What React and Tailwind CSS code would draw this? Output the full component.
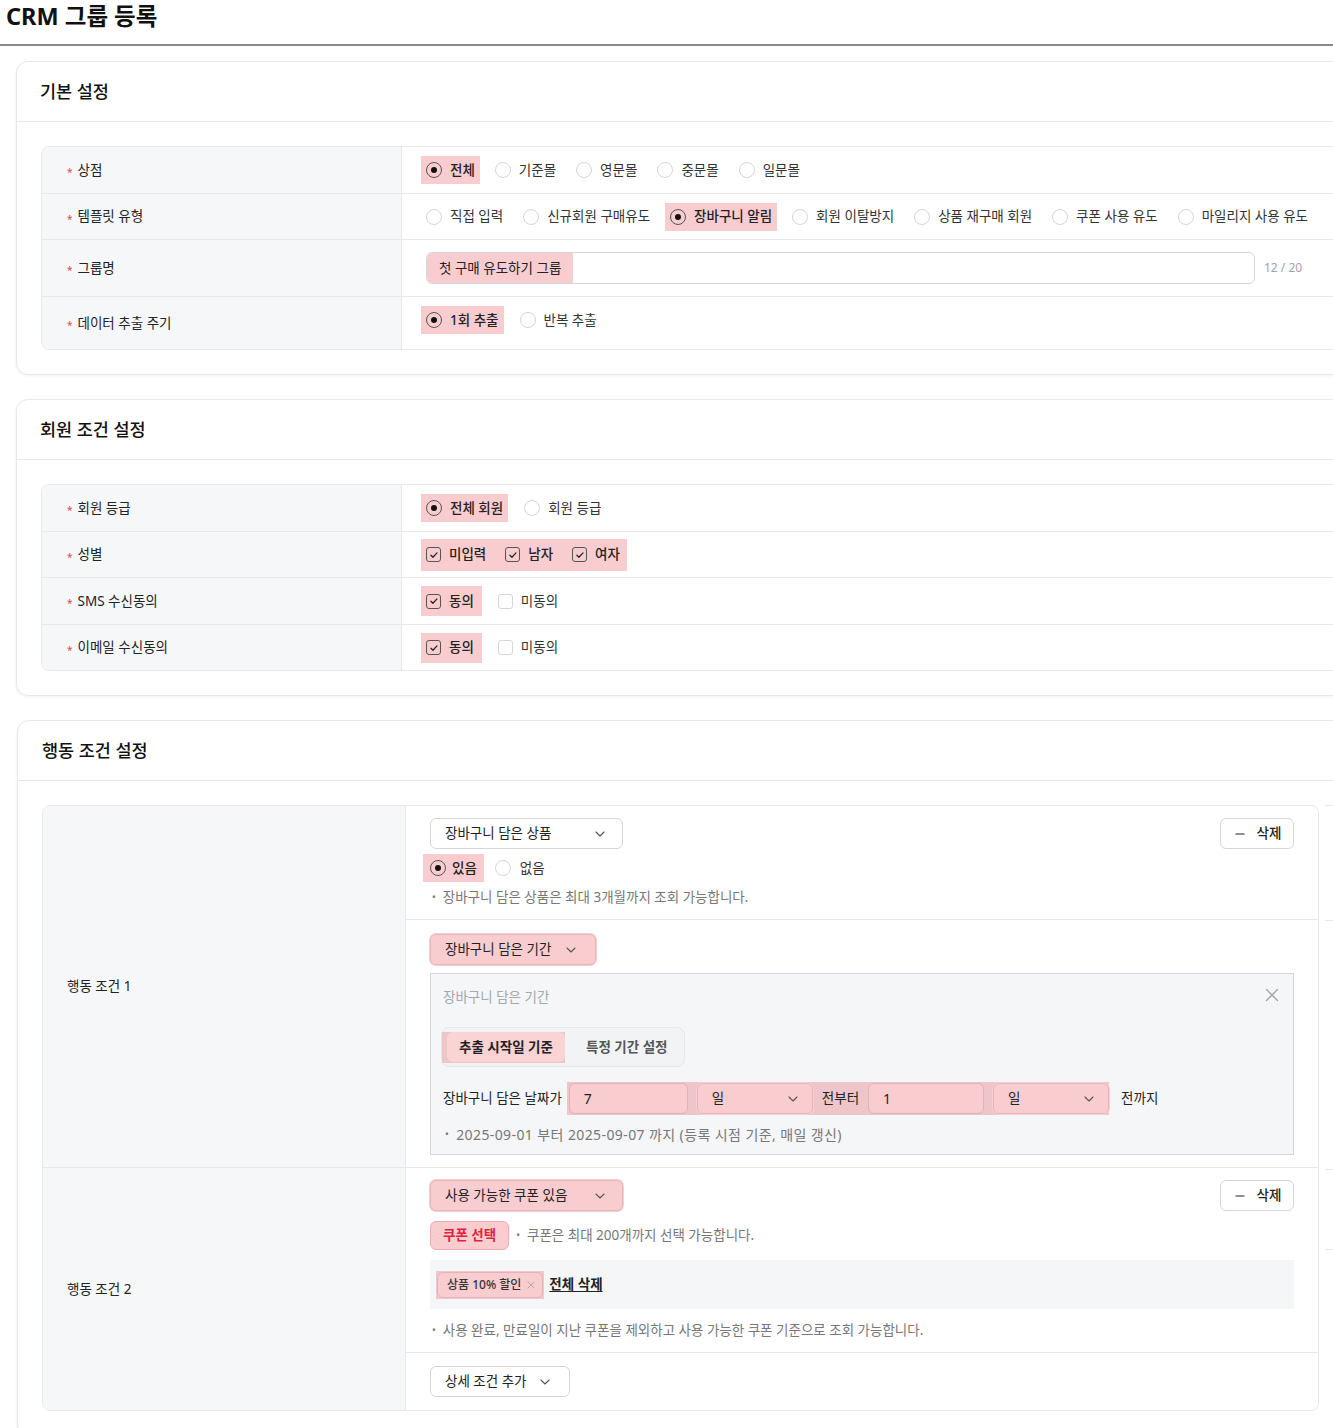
import { ChevronDown, Minus, X } from "lucide-react";

const FONT = "font-['Noto_Sans','Noto_Sans_CJK_KR',sans-serif]";

function Radio({ checked }) {
  if (checked) {
    return (
      <span className="flex h-4 w-4 shrink-0 items-center justify-center rounded-full border border-[#555]">
        <span className="h-[6px] w-[6px] rounded-full bg-[#111]" />
      </span>
    );
  }
  return <span className="h-4 w-4 shrink-0 rounded-full border border-[#d4d6db] bg-white" />;
}

function Check({ checked }) {
  if (checked) {
    return (
      <span className="flex h-[15px] w-[15px] shrink-0 items-center justify-center rounded-[3px] border border-[#555]">
        <svg viewBox="0 0 12 12" className="h-[10px] w-[10px]">
          <path d="M2.3 6.3l2.4 2.4 4.9-5.2" fill="none" stroke="#222" strokeWidth="1.5" strokeLinecap="round" strokeLinejoin="round" />
        </svg>
      </span>
    );
  }
  return <span className="h-[15px] w-[15px] shrink-0 rounded-[3px] border border-[#d4d6db] bg-white" />;
}

function Opt({ type = "radio", checked, label, hl }) {
  return (
    <label className={`flex h-7 items-center gap-2 px-[5px] ${hl ? "bg-[#f9cdd0]" : ""}`}>
      {type === "radio" ? <Radio checked={checked} /> : <Check checked={checked} />}
      <span className={`text-[13.5px] ${checked ? "font-medium text-[#222]" : "text-[#333]"}`}>{label}</span>
    </label>
  );
}

function Row({ label, h, last, cell = "", children }) {
  return (
    <div className={`flex ${h} ${last ? "" : "border-b border-[#e8e9ec]"}`}>
      <div className="flex w-[360px] shrink-0 items-center border-r border-[#e8e9ec] bg-[#f6f7f9] pl-[25px] text-[13.5px] text-[#222]">
        <span className="mr-[5px] mt-[4px] text-[10px] leading-none text-[#ef4444]">*</span>
        {label}
      </div>
      <div className={`flex flex-1 items-center pl-[19px] ${cell}`}>{children}</div>
    </div>
  );
}

function Card({ title, children, className = "", headPad = "px-[23px]" }) {
  return (
    <div className={`w-[1380px] rounded-xl border border-[#e8e9ec] bg-white shadow-[0_1px_3px_rgba(0,0,0,0.06)] ${className}`}>
      <div className={`flex h-[60px] items-center border-b border-[#e8e9ec] ${headPad} text-[17.5px] font-medium text-[#111]`}>
        {title}
      </div>
      {children}
    </div>
  );
}

function Select({ label, w, hl, pr = "pr-[14px]" }) {
  return (
    <div
      className={`flex h-[31px] ${w} shrink-0 items-center justify-between rounded-md border pl-[14px] ${pr} text-[13.5px] text-[#222] ${
        hl ? "border-[#e4b6ba] bg-[#f9cdd0] shadow-[0_0_0_1px_#f9cdd0]" : "border-[#d4d6db] bg-white"
      }`}
    >
      <span>{label}</span>
      <ChevronDown size={16} strokeWidth={1.6} className="text-[#555]" />
    </div>
  );
}

function DeleteBtn() {
  return (
    <div className="flex h-[31px] w-[74px] shrink-0 items-center justify-center gap-[10px] rounded-md border border-[#d4d6db] bg-white text-[13.5px] font-medium text-[#222]">
      <Minus size={14} strokeWidth={1.8} />
      <span>삭제</span>
    </div>
  );
}

function Note({ children, className = "text-[13.5px]" }) {
  return (
    <div className={`flex h-[18px] items-center gap-[7px] text-[#777] ${className}`}>
      <span className="text-[10px]">•</span>
      <span>{children}</span>
    </div>
  );
}

export default function App() {
  return (
    <div className={`h-[1428px] w-[1333px] overflow-hidden bg-white ${FONT}`}>
      <div className="flex h-[46px] items-start border-b-2 border-[#8a8a8a] pl-[6px] pt-[2px]">
        <h1 className="text-[23.5px] font-bold leading-[28px] text-[#111]">CRM 그룹 등록</h1>
      </div>

      <div className="flex flex-col gap-6 pl-4 pt-[15px]">
        {/* 기본 설정 */}
        <Card title="기본 설정">
          <div className="p-6">
            <div className="overflow-hidden rounded-lg border border-[#e8e9ec]">
              <Row label="상점" h="h-[47px]">
                <div className="flex items-center gap-[10px]">
                  <Opt checked hl label="전체" />
                  <Opt label="기준몰" />
                  <Opt label="영문몰" />
                  <Opt label="중문몰" />
                  <Opt label="일문몰" />
                </div>
              </Row>
              <Row label="템플릿 유형" h="h-[46px]">
                <div className="flex items-center gap-[10px]">
                  <Opt label="직접 입력" />
                  <Opt label="신규회원 구매유도" />
                  <Opt checked hl label="장바구니 알림" />
                  <Opt label="회원 이탈방지" />
                  <Opt label="상품 재구매 회원" />
                  <Opt label="쿠폰 사용 유도" />
                  <Opt label="마일리지 사용 유도" />
                </div>
              </Row>
              <Row label="그룹명" h="h-[57px]">
                <div className="ml-[5px] flex items-center">
                  <div className="flex h-[32px] w-[829px] items-center overflow-hidden rounded-md border border-[#d4d6db]">
                    <div className="flex h-full items-center bg-[#f9cdd0] px-[12px] text-[13.5px] text-[#222]">
                      첫 구매 유도하기 그룹
                    </div>
                  </div>
                  <span className="ml-[9px] text-[12px] text-[#9ca3af]">12 / 20</span>
                </div>
              </Row>
              <Row label="데이터 추출 주기" h="h-[52px]" last cell="pb-[6px]">
                <div className="flex items-center gap-[11px]">
                  <Opt checked hl label="1회 추출" />
                  <Opt label="반복 추출" />
                </div>
              </Row>
            </div>
          </div>
        </Card>

        {/* 회원 조건 설정 */}
        <Card title="회원 조건 설정">
          <div className="p-6">
            <div className="overflow-hidden rounded-lg border border-[#e8e9ec]">
              <Row label="회원 등급" h="h-[47px]">
                <div className="flex items-center gap-[11px]">
                  <Opt checked hl label="전체 회원" />
                  <Opt label="회원 등급" />
                </div>
              </Row>
              <Row label="성별" h="h-[46px]">
                <div className="flex h-8 items-center gap-[9px] bg-[#f9cdd0] pr-[2px]">
                  <Opt type="check" checked label="미입력" />
                  <Opt type="check" checked label="남자" />
                  <Opt type="check" checked label="여자" />
                </div>
              </Row>
              <Row label="SMS 수신동의" h="h-[47px]">
                <div className="flex items-center gap-[11px]">
                  <div className="flex h-[30px] items-center bg-[#f9cdd0] pr-[3px]">
                    <Opt type="check" checked label="동의" />
                  </div>
                  <Opt type="check" label="미동의" />
                </div>
              </Row>
              <Row label="이메일 수신동의" h="h-[45px]" last>
                <div className="flex items-center gap-[11px]">
                  <div className="flex h-[30px] items-center bg-[#f9cdd0] pr-[3px]">
                    <Opt type="check" checked label="동의" />
                  </div>
                  <Opt type="check" label="미동의" />
                </div>
              </Row>
            </div>
          </div>
        </Card>

        {/* 행동 조건 설정 */}
        <Card title="행동 조건 설정" className="ml-[1px]" headPad="px-[24px]">
          <div className="flex gap-[6px] p-6">
            <div className="w-[1277px] shrink-0 overflow-hidden rounded-lg border border-[#e8e9ec]">
              {/* 행동 조건 1 */}
              <div className="flex border-b border-[#e8e9ec]">
                <div className="flex w-[363px] shrink-0 items-center border-r border-[#e8e9ec] bg-[#f6f7f9] pl-[24px] text-[13.5px] text-[#222]">
                  행동 조건 1
                </div>
                <div className="flex-1">
                  <div className="border-b border-[#e8e9ec] px-6 pb-[13px] pt-[12px]">
                    <div className="flex items-start justify-between">
                      <Select label="장바구니 담은 상품" w="w-[193px]" />
                      <DeleteBtn />
                    </div>
                    <div className="ml-[-7px] mt-[5px] flex items-center gap-[4px]">
                      <label className="flex h-7 items-center gap-[6px] bg-[#f9cdd0] px-[7px]">
                        <Radio checked />
                        <span className="text-[13.5px] font-medium text-[#222]">있음</span>
                      </label>
                      <label className="flex h-7 items-center gap-[9px] px-[7px]">
                        <Radio />
                        <span className="text-[13.5px] text-[#333]">없음</span>
                      </label>
                    </div>
                    <Note className="mt-[6px] pl-[2px] text-[13.5px]">장바구니 담은 상품은 최대 3개월까지 조회 가능합니다.</Note>
                  </div>

                  <div className="px-6 pb-[12px] pt-[14px]">
                    <Select label="장바구니 담은 기간" w="w-[166px]" hl pr="pr-[16px]" />
                    <div className="mt-[8px] h-[182px] w-[864px] border border-[#d4d6db] bg-[#f5f6f8] px-[12px] pt-[14px]">
                      <div className="flex h-[18px] items-center justify-between">
                        <span className="text-[13.5px] text-[#a3a7ae]">장바구니 담은 기간</span>
                        <X size={22} strokeWidth={1.4} className="mr-[-2px] mt-[-5px] text-[#9ca3af]" />
                      </div>
                      <div className="ml-[-2px] mt-[21px] flex h-[40px] w-[244px] items-center rounded-lg border border-[#e6e7ea] bg-[#f2f3f5]">
                        <div className="flex h-[31px] items-center bg-[#eec6c9] pl-[5px]">
                          <div className="flex h-[30px] items-center rounded-md bg-[#fad3d5] px-[12px] text-[13.5px] font-semibold text-[#222]">
                            추출 시작일 기준
                          </div>
                        </div>
                        <span className="ml-[21px] text-[13.5px] font-semibold text-[#555]">특정 기간 설정</span>
                      </div>
                      <div className="mt-[15px] flex items-center text-[13.5px] text-[#222]">
                        <span>장바구니 담은 날짜가</span>
                        <div className="ml-[5px] flex h-[33px] items-center gap-[9px] bg-[#eec6c9] pl-[2px]">
                          <div className="flex h-[31px] w-[119px] items-center rounded-md border border-[#e0b3b7] bg-[#f9cdd0] pl-[14px] text-[14px]">7</div>
                          <Select label="일" w="w-[116px]" hl pr="pr-[11px]" />
                          <span>전부터</span>
                          <div className="flex h-[31px] w-[116px] items-center rounded-md border border-[#e0b3b7] bg-[#f9cdd0] pl-[14px] text-[14px]">1</div>
                          <Select label="일" w="w-[116px]" hl pr="pr-[11px]" />
                        </div>
                        <span className="ml-[12px]">전까지</span>
                      </div>
                      <Note className="mt-[9px] h-[20px] pl-[2px] text-[14px] tracking-[0.4px]">2025-09-01 부터 2025-09-07 까지 (등록 시점 기준, 매일 갱신)</Note>
                    </div>
                  </div>
                </div>
              </div>

              {/* 행동 조건 2 */}
              <div className="flex">
                <div className="flex w-[363px] shrink-0 items-center border-r border-[#e8e9ec] bg-[#f6f7f9] pl-[24px] text-[13.5px] text-[#222]">
                  행동 조건 2
                </div>
                <div className="flex-1">
                  <div className="border-b border-[#e8e9ec] px-6 pb-[13px] pt-[12px]">
                    <div className="flex items-start justify-between">
                      <Select label="사용 가능한 쿠폰 있음" w="w-[193px]" hl />
                      <DeleteBtn />
                    </div>
                    <div className="mt-[10px] flex items-center gap-[7px]">
                      <div className="flex h-[29px] items-center rounded-md border border-[#f0aab1] bg-[#f9cdd0] px-[12px] text-[13.5px] font-semibold text-[#e0223f]">
                        쿠폰 선택
                      </div>
                      <Note>쿠폰은 최대 200개까지 선택 가능합니다.</Note>
                    </div>
                    <div className="mt-[10px] flex h-[49px] w-[864px] items-center gap-[5px] bg-[#f5f6f8] px-[6px]">
                      <div className="flex h-[28px] items-center bg-[#f0c8cb] px-[1px]">
                        <div className="flex h-[26px] items-center gap-[4px] rounded-md border border-[#e4b3b8] bg-[#f9cdd0] pl-[9px] pr-[5px] text-[12px] font-medium text-[#333]">
                          상품 10% 할인
                          <X size={12} strokeWidth={1.5} className="text-[#999]" />
                        </div>
                      </div>
                      <span className="text-[13.5px] font-semibold text-[#222] underline underline-offset-2">전체 삭제</span>
                    </div>
                    <Note className="mt-[12px] pl-[2px] text-[13.5px]">사용 완료, 만료일이 지난 쿠폰을 제외하고 사용 가능한 쿠폰 기준으로 조회 가능합니다.</Note>
                  </div>
                  <div className="px-6 py-[13px]">
                    <Select label="상세 조건 추가" w="w-[140px]" pr="pr-[16px]" />
                  </div>
                </div>
              </div>
            </div>
            <div className="flex-1 border-t border-[#e8e9ec]">
              <div className="h-[115px] border-b border-[#e8e9ec]" />
              <div className="h-[249px] border-b border-[#e8e9ec]" />
              <div className="h-[80px] border-b border-[#e8e9ec]" />
            </div>
          </div>
        </Card>
      </div>
    </div>
  );
}
